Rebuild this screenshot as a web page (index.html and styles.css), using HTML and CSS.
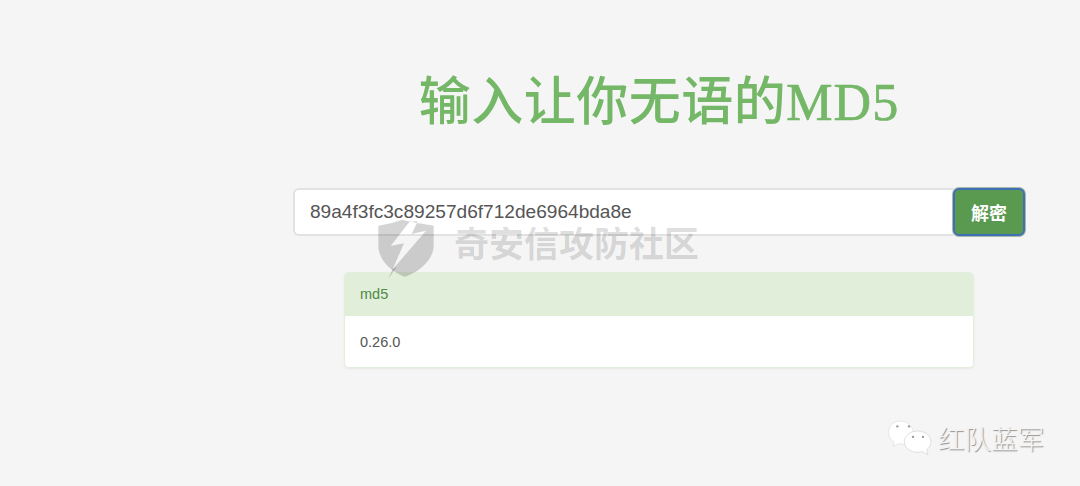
FILE: index.html
```html
<!DOCTYPE html>
<html lang="zh-CN">
<head>
    <meta charset="UTF-8">
    <title>输入让你无语的MD5</title>
    <link rel="stylesheet" href="styles.css">
</head>
<body>
    <div class="kontener">
        <h1 class="tytul">输入让你无语的<span class="tytul-md5">MD5</span></h1>
        <form class="szukaj">
            <input class="pole" type="text" value="89a4f3fc3c89257d6f712de6964bda8e">
            <button class="przycisk" type="button">解密</button>
        </form>
        <div class="panel">
            <div class="panel-naglowek">md5</div>
            <div class="panel-tresc">0.26.0</div>
        </div>
    </div>

    <!-- watermarks over the page -->
    <div class="znak-srodek">
        <svg width="80" height="75" viewBox="0 0 240 225">
            <path fill-rule="evenodd" fill="rgba(0,0,0,0.17)" d="M25 47 C50 42 75 37 97 29 C125 37 165 42 191 47 L191 110 C188 150 150 185 105 200 C60 185 28 150 25 110 Z M118 36 L62 108 L102 100 L68 178 L168 62 L125 72 L143 34 Z"/>
            <path d="M68 178 L55 206 L80 170 Z" fill="rgba(0,0,0,0.2)"/>
        </svg>
        <span class="znak-tekst">奇安信攻防社区</span>
    </div>
    <div class="znak-wechat">
        <svg width="55" height="45" viewBox="0 0 165 135">
            <path d="M48 18 C26 18 10 33 10 52 C10 64 17 74 27 81 L24 94 L43 86 C47 87 52 88 58 88 C66 88 78 85 85 78 C95 60 80 18 48 18 Z" fill="#fff" stroke="#ddd" stroke-width="2"/>
            <path d="M98 48 C76 48 58 62 58 80 C58 98 76 112 98 112 C103 112 108 111 112 110 L129 119 L125 104 C133 98 138 90 138 80 C138 62 120 48 98 48 Z" fill="#fff" stroke="#cfcfcf" stroke-width="2"/>
            <circle cx="37" cy="34" r="3.5" fill="#9a9a9a"/>
            <circle cx="72" cy="34" r="3.5" fill="#9a9a9a"/>
            <circle cx="84" cy="66" r="3.5" fill="#9a9a9a"/>
            <circle cx="114" cy="66" r="3.5" fill="#9a9a9a"/>
        </svg>
        <span class="wechat-tekst">红队蓝军</span>
    </div>
</body>
</html>
```

FILE: styles.css
```css
body {
    margin: 0;
    padding: 0;
    height: 486px;
    overflow: hidden;
    background-color: #F5F5F5;
    font-family: "Liberation Sans", "Noto Sans CJK SC", sans-serif;
}

.kontener {
    width: 732px;
    margin-left: 293px;
    display: flex;
    flex-direction: column;
    align-items: center;
}

.tytul {
    margin: 69px 0 0 0;
    height: 119px;
    font-family: "Liberation Serif", "Noto Sans CJK SC", serif;
    font-size: 52px;
    line-height: 68px;
    font-weight: 500;
    letter-spacing: 0.5px;
    color: #74B767;
    white-space: nowrap;
}

.tytul-md5 {
    -webkit-text-stroke: 0.7px #74B767;
    letter-spacing: 1px;
}

.szukaj {
    display: flex;
    width: 100%;
    height: 48px;
    margin: 0 0 36px 0;
}

.pole {
    flex: 1;
    min-width: 0;
    box-sizing: border-box;
    padding: 0 15px;
    border: 2px solid #E2E2E2;
    border-right: 0;
    border-radius: 6px 0 0 6px;
    background-color: #FFF;
    color: #555;
    font-family: inherit;
    font-size: 19.1px;
    outline: none;
}

.przycisk {
    box-sizing: border-box;
    width: 72px;
    height: 48px;
    border: 2px solid #3F6FB5;
    border-radius: 6px;
    box-shadow: 0 0 0 1px #A9BBA6;
    background-color: #5A9A50;
    color: #FFF;
    font-family: inherit;
    font-size: 18px;
    font-weight: 700;
    padding: 0 0 1px 0;
}

.panel {
    box-sizing: border-box;
    width: 630px;
    border: 1px solid #E4EEDC;
    border-radius: 5px;
    box-shadow: 0 1px 2px #E6E9E2;
    overflow: hidden;
    font-size: 14.5px;
}

.panel-naglowek {
    height: 43px;
    line-height: 43px;
    padding: 0 15px;
    background-color: #E1EEDA;
    color: #4F8A46;
}

.panel-tresc {
    height: 51px;
    line-height: 52px;
    padding: 0 15px;
    background-color: #FFF;
    color: #555;
}

.znak-srodek {
    position: absolute;
    left: 370px;
    top: 210px;
    display: flex;
    align-items: flex-start;
    gap: 4px;
}

.znak-tekst {
    margin-top: 10px;
    font-family: "Noto Sans CJK SC", sans-serif;
    font-size: 35px;
    line-height: 44px;
    font-weight: 700;
    color: rgba(0, 0, 0, 0.14);
    white-space: nowrap;
}

.znak-wechat {
    position: absolute;
    left: 885px;
    top: 415px;
    display: flex;
    align-items: center;
}

.wechat-tekst {
    margin-left: -2px;
    font-family: "Noto Sans CJK SC", sans-serif;
    font-size: 26.5px;
    font-weight: 300;
    line-height: 45px;
    color: #F4F4F4;
    text-shadow: 1px 1px 1px #8E8E8E;
    white-space: nowrap;
}
```
